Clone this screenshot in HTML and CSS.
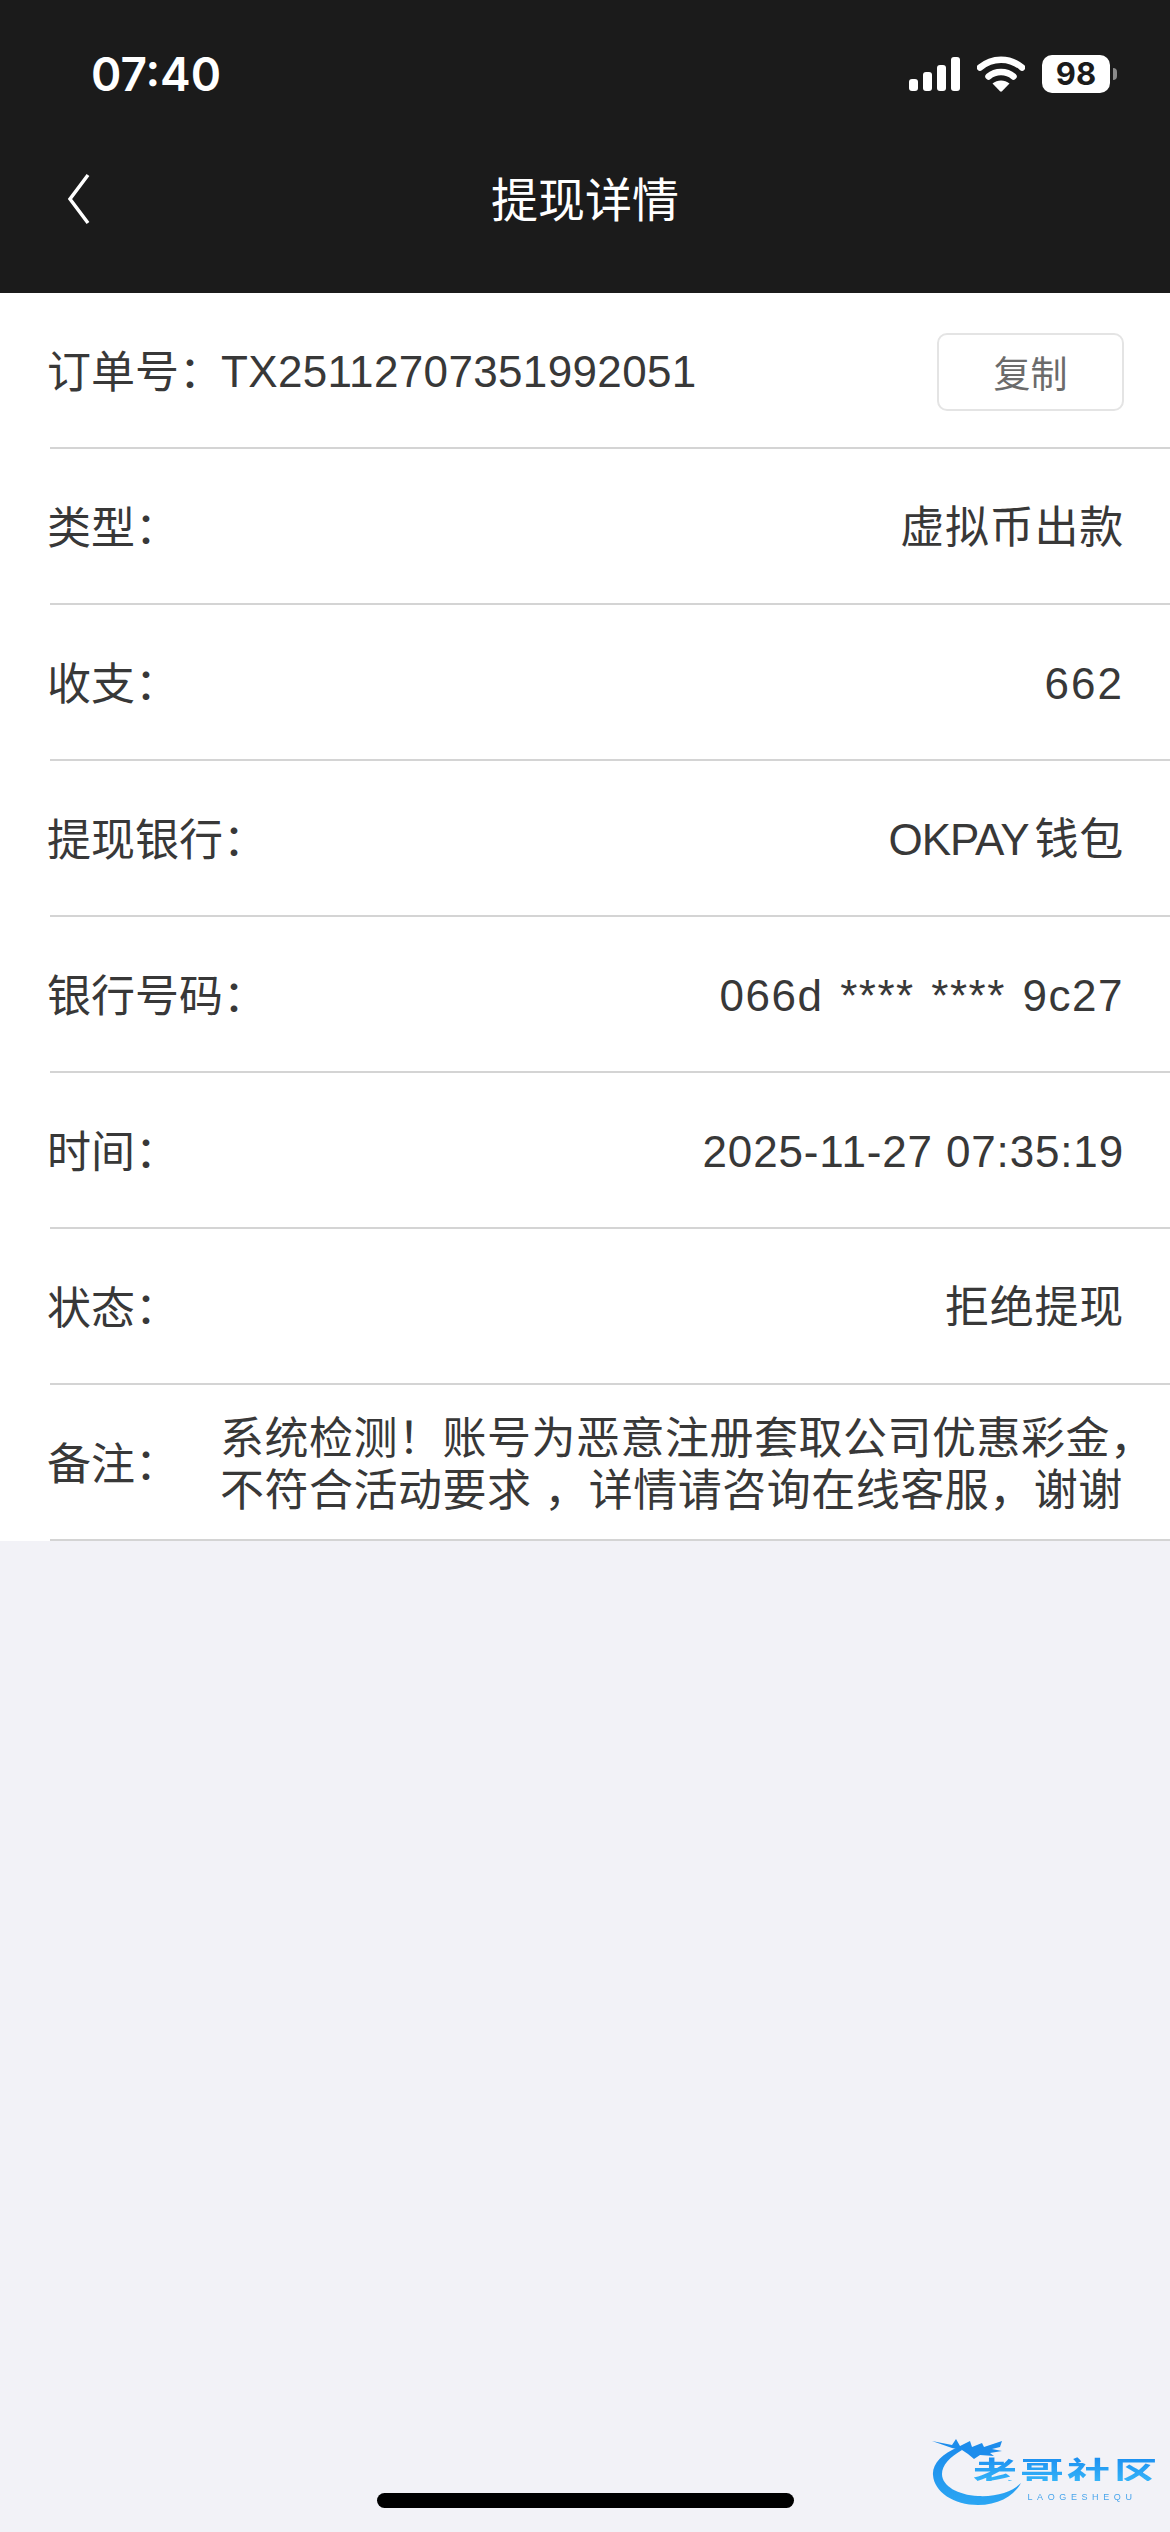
FILE: index.html
```html
<!DOCTYPE html>
<html lang="zh-CN">
<head>
    <meta charset="utf-8">
    <title>提现详情</title>
    <link rel="stylesheet" href="styles.css">
</head>
<body>
    <div class="page">
        <header class="top">
            <div class="status">
                <span class="clock">07:40</span>
                <div class="status-icons">
                    <svg class="signal" width="51" height="34" viewBox="0 0 51 34">
                        <rect x="0" y="22" width="9" height="12" rx="3" fill="#fff"/>
                        <rect x="14" y="15" width="9" height="19" rx="3" fill="#fff"/>
                        <rect x="28" y="8" width="9" height="26" rx="3" fill="#fff"/>
                        <rect x="42" y="0" width="9" height="34" rx="3" fill="#fff"/>
                    </svg>
                    <svg class="wifi" width="48" height="36" viewBox="0 0 48 36">
                        <path d="M3 11.5C15 1 33 1 45 11.5" fill="none" stroke="#fff" stroke-width="6.5" stroke-linecap="round"/>
                        <path d="M11.5 20.5C18.5 14.5 29.5 14.5 36.5 20.5" fill="none" stroke="#fff" stroke-width="6.5" stroke-linecap="round"/>
                        <path d="M15.5 27.5C20.5 23.5 27.5 23.5 32.5 27.5L25 35.3Q24 36 23 35.3Z" fill="#fff"/>
                    </svg>
                    <div class="battery">
                        <span class="battery-level">98</span>
                        <span class="battery-nub"></span>
                    </div>
                </div>
            </div>
            <div class="nav">
                <svg class="back" width="24" height="54" viewBox="0 0 24 54">
                    <path d="M21 3L3 27L21 51" fill="none" stroke="#fff" stroke-width="3.5"/>
                </svg>
                <h1 class="nav-title">提现详情</h1>
            </div>
        </header>

        <section class="details">
            <div class="row">
                <span class="label">订单号&#xFF1A;</span>
                <span class="order-no">TX25112707351992051</span>
                <button class="copy-btn">复制</button>
            </div>
            <div class="row">
                <span class="label">类型&#xFF1A;</span>
                <span class="value">虚拟币出款</span>
            </div>
            <div class="row">
                <span class="label">收支&#xFF1A;</span>
                <span class="value value-amount">662</span>
            </div>
            <div class="row">
                <span class="label">提现银行&#xFF1A;</span>
                <span class="value"><span class="bank-name">OKPAY</span>钱包</span>
            </div>
            <div class="row">
                <span class="label">银行号码&#xFF1A;</span>
                <span class="value value-card">066d **** **** 9c27</span>
            </div>
            <div class="row">
                <span class="label">时间&#xFF1A;</span>
                <span class="value value-time">2025-11-27 07:35:19</span>
            </div>
            <div class="row">
                <span class="label">状态&#xFF1A;</span>
                <span class="value">拒绝提现</span>
            </div>
            <div class="row">
                <span class="label">备注&#xFF1A;</span>
                <p class="note">系统检测&#xFF01;账号为恶意注册套取公司优惠彩金&#xFF0C;<br>不符合活动要求 &#xFF0C;详情请咨询在线客服&#xFF0C;谢谢</p>
            </div>
        </section>

        <div class="watermark">
            <svg class="dragon" width="90" height="70" viewBox="0 0 90 70">
                <defs>
                    <linearGradient id="dragonBlue" x1="0" y1="0" x2="0" y2="1">
                        <stop offset="0" stop-color="#1c8cec"/>
                        <stop offset="1" stop-color="#2ba6f3"/>
                    </linearGradient>
                </defs>
                <path d="M26 9C10 16 0 26 1 37C2 54 22 67 46 67C66 67 82 58 89 45C80 54 64 59 46 58C26 57 10 48 10 36C10 27 18 19 30 12Z" fill="url(#dragonBlue)"/>
                <path d="M0 3L20 7L24 1L28 8L38 3L40 9L50 5L52 9L70 3L68 9L60 11L70 13L58 15L62 18L48 17L42 21L36 16L30 12L20 10Z" fill="#1c8cec"/>
            </svg>
            <div class="brand">
                <span class="brand-name">老哥社区</span>
                <span class="brand-sub">LAOGESHEQU</span>
            </div>
        </div>

        <div class="home-bar"></div>
    </div>
</body>
</html>
```

FILE: styles.css
```css
* {
    box-sizing: border-box;
}
body {
    margin: 0;
    font-family: "Liberation Sans", "Noto Sans CJK SC", sans-serif;
    background-color: #f2f2f7;
    color: #383838;
}
.page {
    position: relative;
    width: 1170px;
    height: 2532px;
    overflow: hidden;
}

/* header */
.top {
    height: 293px;
    background-color: #1b1b1b;
    color: #fff;
}
.status {
    height: 147px;
    padding: 46px 53px 0 91px;
    display: flex;
    justify-content: space-between;
    align-items: flex-start;
}
.clock {
    font-family: Inter, "Liberation Sans", sans-serif;
    font-size: 46px;
    font-weight: 600;
    line-height: 56px;
}
.status-icons {
    display: flex;
    align-items: center;
    gap: 17px;
    padding-top: 9px;
}
.battery {
    display: flex;
    align-items: center;
    gap: 3px;
}
.battery-level {
    width: 68px;
    height: 38px;
    border-radius: 10px;
    background-color: #fff;
    color: #1b1b1b;
    font-family: Inter, "Liberation Sans", sans-serif;
    font-size: 31px;
    font-weight: 700;
    line-height: 38px;
    text-align: center;
}
.battery-nub {
    width: 4px;
    height: 12px;
    border-radius: 0 4px 4px 0;
    background-color: #8a8a8a;
}
.nav {
    height: 146px;
    padding: 0 0 42px 67px;
    display: flex;
    align-items: center;
    position: relative;
}
.nav-title {
    position: absolute;
    left: 0;
    right: 0;
    top: 15px;
    margin: 0;
    font-size: 47px;
    font-weight: 400;
    text-align: center;
}

/* rows */
.details {
    background-color: #fff;
}
.row {
    height: 156px;
    margin-left: 50px;
    padding: 6px 46px 0 0;
    border-bottom: 2px solid #d4d4d4;
    display: flex;
    align-items: center;
    justify-content: space-between;
    font-size: 44px;
    line-height: 52px;
    white-space: nowrap;
}
.label {
    margin-left: -3px;
}
.order-no {
    margin: 0 auto 3px -2px;
    letter-spacing: 0.35px;
}
.value {
    margin-bottom: 3px;
    letter-spacing: 0.75px;
}
.value-amount {
    letter-spacing: 2px;
}
.value-card {
    letter-spacing: 1.5px;
    word-spacing: 3px;
}
.value-time {
    letter-spacing: 0.85px;
}
.bank-name {
    margin-right: 6px;
    letter-spacing: -1px;
}
.copy-btn {
    width: 187px;
    height: 78px;
    margin-bottom: 3px;
    padding: 0;
    border: 2px solid #e4e4e4;
    border-radius: 10px;
    background-color: #fff;
    color: #6b6b6b;
    font-family: inherit;
    font-size: 37px;
}
.note {
    flex: none;
    width: 934px;
    margin: 0 -30px 0 auto;
    letter-spacing: 0.5px;
}

/* logo in the corner */
.watermark {
    position: absolute;
    left: 932px;
    top: 2438px;
    display: flex;
    align-items: flex-start;
    filter: blur(0.4px);
}
.dragon {
    flex: none;
}
.brand {
    margin: 18px 0 0 -49px;
    display: flex;
    flex-direction: column;
    align-items: center;
}
.brand-name {
    height: 36px;
    font-size: 44px;
    font-weight: 700;
    line-height: 50px;
    letter-spacing: 3px;
    white-space: nowrap;
    transform: scaleY(0.7);
    transform-origin: top;
    color: transparent;
    background: linear-gradient(#1a8df0, #35b4f8);
    -webkit-background-clip: text;
    background-clip: text;
}
.brand-sub {
    margin-left: 30px;
    font-size: 9px;
    line-height: 10px;
    letter-spacing: 4.6px;
    color: #4aa5ec;
}

.home-bar {
    position: absolute;
    left: 377px;
    top: 2493px;
    width: 417px;
    height: 15px;
    border-radius: 8px;
    background-color: #000;
}
```
